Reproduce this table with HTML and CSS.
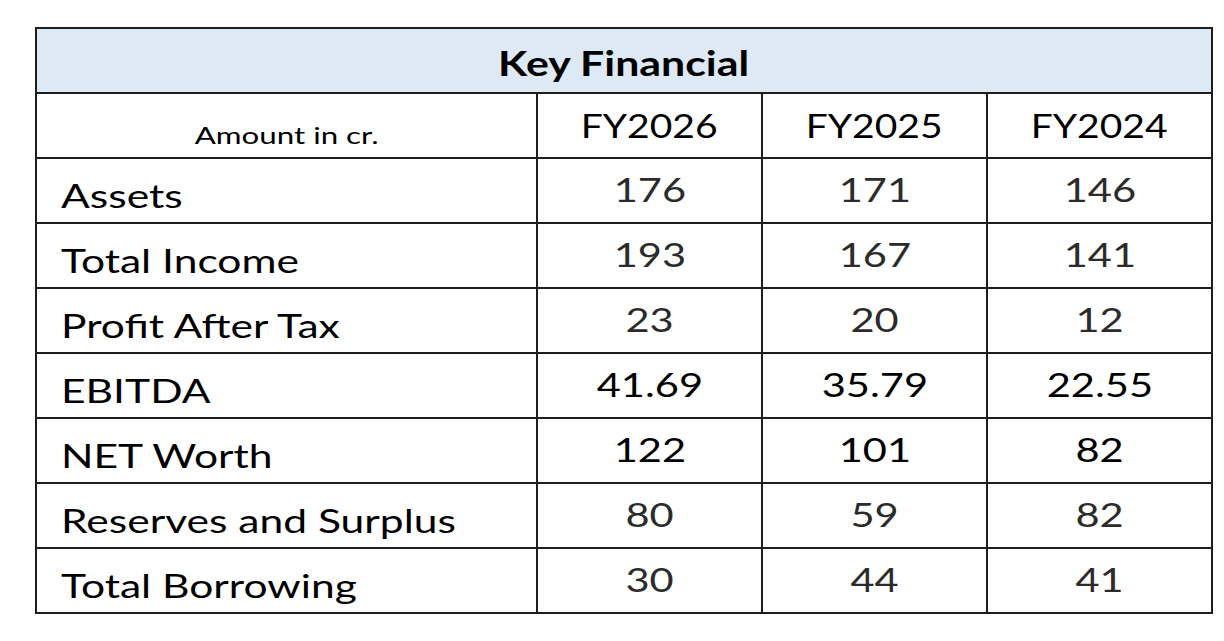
FILE: index.html
```html
<!DOCTYPE html>
<html lang="en">
<head>
<meta charset="utf-8">
<title>Key Financial</title>
<link rel="stylesheet" href="styles.css">
</head>
<body>
<table class="fin">
  <colgroup>
    <col class="c-label">
    <col class="c-year">
    <col class="c-year">
    <col class="c-year">
  </colgroup>
  <thead>
    <tr class="title-row"><th colspan="4" class="title"><span class="t">Key Financial</span></th></tr>
    <tr class="year-row">
      <th class="unit"><span class="t">Amount in cr.</span></th>
      <th class="year"><span class="t">FY2026</span></th>
      <th class="year"><span class="t">FY2025</span></th>
      <th class="year"><span class="t">FY2024</span></th>
    </tr>
  </thead>
  <tbody>
    <tr class="soft"><td class="label"><span class="t">Assets</span></td><td class="num"><span class="t">176</span></td><td class="num"><span class="t">171</span></td><td class="num"><span class="t">146</span></td></tr>
    <tr class="soft"><td class="label"><span class="t">Total Income</span></td><td class="num"><span class="t">193</span></td><td class="num"><span class="t">167</span></td><td class="num"><span class="t">141</span></td></tr>
    <tr class="soft"><td class="label"><span class="t">Profit After Tax</span></td><td class="num"><span class="t">23</span></td><td class="num"><span class="t">20</span></td><td class="num"><span class="t">12</span></td></tr>
    <tr class="strong"><td class="label"><span class="t">EBITDA</span></td><td class="num"><span class="t">41.69</span></td><td class="num"><span class="t">35.79</span></td><td class="num"><span class="t">22.55</span></td></tr>
    <tr class="strong"><td class="label"><span class="t">NET Worth</span></td><td class="num"><span class="t">122</span></td><td class="num"><span class="t">101</span></td><td class="num"><span class="t">82</span></td></tr>
    <tr class="soft"><td class="label"><span class="t">Reserves and Surplus</span></td><td class="num"><span class="t">80</span></td><td class="num"><span class="t">59</span></td><td class="num"><span class="t">82</span></td></tr>
    <tr class="soft"><td class="label"><span class="t">Total Borrowing</span></td><td class="num"><span class="t">30</span></td><td class="num"><span class="t">44</span></td><td class="num"><span class="t">41</span></td></tr>
  </tbody>
</table>
</body>
</html>
```

FILE: styles.css
```css
html, body {
  margin: 0;
  padding: 0;
  background: #ffffff;
}

body {
  font-family: "Lato", "Open Sans", sans-serif;
  color: #000000;
}

.fin {
  margin: 27px 0 0 35px;
  width: 1178px;
  border-collapse: collapse;
  table-layout: fixed;
}

.c-label { width: 501px; }
.c-year { width: 225px; }

.fin th,
.fin td {
  border: 2px solid #1e1e1e;
  height: 63px;
  padding: 0;
  box-sizing: border-box;
  vertical-align: bottom;
  line-height: 1;
  white-space: nowrap;
}

.fin tr { height: 65px; }

.t {
  display: inline-block;
  transform-origin: center bottom;
}

.title {
  background: #dde9f5;
  font-weight: 700;
  font-size: 34px;
  text-align: center;
  padding-bottom: 12px !important;
}
.title .t { transform: scaleX(1.26); }

.unit {
  font-weight: 400;
  font-size: 23px;
  text-align: center;
  padding-bottom: 10px !important;
}
.unit .t { transform: scaleX(1.36); }

.year {
  font-weight: 400;
  font-size: 32px;
  text-align: center;
  padding-bottom: 15px !important;
}
.year .t { transform: scaleX(1.22); }

.label {
  font-size: 32px;
  text-align: left;
  padding-left: 24px !important;
  padding-bottom: 10px !important;
}
.label .t {
  transform-origin: left bottom;
  transform: scaleX(1.33);
}

.num {
  font-size: 32px;
  text-align: center;
  padding-bottom: 16px !important;
}
.num .t { transform: scaleX(1.3); }

.soft .num { color: #2b2b2b; }
.strong .num { color: #000000; }
```
